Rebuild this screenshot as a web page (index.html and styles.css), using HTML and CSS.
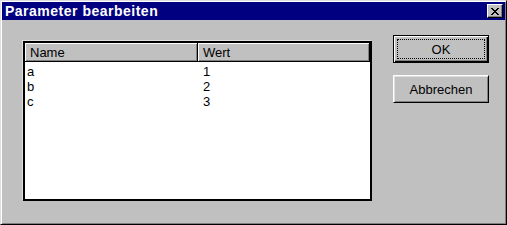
FILE: index.html
```html
<!DOCTYPE html>
<html lang="de">
<head>
  <meta charset="UTF-8" />
  <title>Parameter bearbeiten</title>
  <link rel="stylesheet" href="styles.css">
</head>
<body>
  <div class="window">
    <div class="titlebar">
      <span class="title">Parameter bearbeiten</span>
      <button class="close" aria-label="Schließen">
        <svg width="8" height="7" viewBox="0 0 8 7" shape-rendering="crispEdges">
          <path d="M0 0h2v1H0zM6 0h2v1H6zM1 1h2v1H1zM5 1h2v1H5zM2 2h4v1H2zM3 3h2v1H3zM2 4h4v1H2zM1 5h2v1H1zM5 5h2v1H5zM0 6h2v1H0zM6 6h2v1H6z" fill="#000"/>
        </svg>
      </button>
    </div>

    <div class="content">
      <div class="listbox">
        <div class="list-head">
          <div class="col-head">Name</div>
          <div class="col-head">Wert</div>
        </div>
        <div class="list-body">
          <div class="list-row"><span>a</span><span>1</span></div>
          <div class="list-row"><span>b</span><span>2</span></div>
          <div class="list-row"><span>c</span><span>3</span></div>
        </div>
      </div>

      <div class="buttons">
        <button class="btn btn-default">OK</button>
        <button class="btn">Abbrechen</button>
      </div>
    </div>
  </div>
</body>
</html>
```

FILE: styles.css
```css
body { margin: 0; font-family: "Liberation Sans", Arial, sans-serif; font-size: 13px; background: #c0c0c0; }
button { font-family: inherit; font-size: inherit; color: #000; }

.window { width: 507px; height: 225px; box-sizing: border-box; padding: 1px; background: #c0c0c0;
  border: 1px solid; border-color: #dfdfdf #000 #000 #dfdfdf;
  box-shadow: inset 1px 1px #fff, inset -1px -1px #808080; display: flex; flex-direction: column; }

.titlebar { height: 18px; background: #000080; display: flex; align-items: center; padding: 0 2px 0 3px; }
.title { flex: 1; color: #fff; font-weight: bold; font-size: 14px; letter-spacing: 0.5px; }
.close { width: 16px; height: 14px; padding: 0; background: #c0c0c0; display: flex; align-items: center; justify-content: center;
  border: 1px solid; border-color: #fff #000 #000 #fff; box-shadow: inset -1px -1px #808080; }

.content { flex: 1; display: flex; align-items: flex-start; padding-left: 21px; }

.listbox { width: 349px; height: 160px; box-sizing: border-box; margin-top: 21px; background: #fff;
  border: 2px solid #000; box-shadow: -1px -1px 0 #dfdfdf; }
.list-head { display: grid; grid-template-columns: 173px 1fr; height: 19px; }
.col-head { background: #c0c0c0; border-right: 1px solid #000; border-bottom: 1px solid #000;
  box-shadow: inset 1px 1px #fff, inset -1px -1px #808080; padding-left: 5px; display: flex; align-items: center; }
.list-body { padding-top: 2px; }
.list-row { display: grid; grid-template-columns: 175px 1fr; height: 15px; line-height: 15px; padding-left: 2px; }
.list-row span:last-child { padding-left: 1px; }

.buttons { display: flex; flex-direction: column; gap: 12px; margin: 15px 0 0 21px; }
.btn { width: 96px; height: 28px; padding: 0; background: #c0c0c0; position: relative;
  border: 1px solid; border-color: #fff #000 #000 #fff; box-shadow: inset 1px 1px #dfdfdf, inset -1px -1px #808080; }
.btn-default { border-color: #000; box-shadow: inset 1px 1px #fff, inset -1px -1px #000, inset -2px -2px #808080; }
.btn-default::after { content: ""; position: absolute; inset: 3px; border: 1px dotted #000; }
```
